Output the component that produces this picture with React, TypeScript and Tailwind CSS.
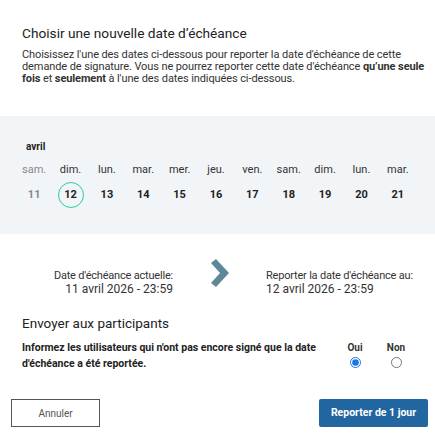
import React, { useState } from 'react';

const days = [
  { wd: 'sam.', d: 11, disabled: true },
  { wd: 'dim.', d: 12 },
  { wd: 'lun.', d: 13 },
  { wd: 'mar.', d: 14 },
  { wd: 'mer.', d: 15 },
  { wd: 'jeu.', d: 16 },
  { wd: 'ven.', d: 17 },
  { wd: 'sam.', d: 18 },
  { wd: 'dim.', d: 19 },
  { wd: 'lun.', d: 20 },
  { wd: 'mar.', d: 21 },
];

export default function App() {
  const [selected, setSelected] = useState(12);
  const [notify, setNotify] = useState(true);

  return (
    <div
      className="w-[435px] h-[440px] bg-white text-[#333] overflow-hidden"
      style={{ fontFamily: 'Roboto, "Liberation Sans", sans-serif' }}
    >
      <div className="px-[22px] pt-[24px]">
        <h2 className="text-[13.7px] leading-[18px] text-[#222]">Choisir une nouvelle date d’échéance</h2>
        <p className="mt-[7px] w-[408px] text-[11px] leading-[12px] tracking-[-0.1px] text-[#333]">
          Choisissez l'une des dates ci-dessous pour reporter la date d'échéance de cette demande de
          signature. Vous ne pourrez reporter cette date d'échéance <b>qu’une seule fois</b> et{' '}
          <b>seulement</b> à l'une des dates indiquées ci-dessous.
        </p>
      </div>

      <div className="mt-[31px] h-[118px] bg-[#f2f5f8] px-[16px] pt-[25px]">
        <div className="pl-[10px] text-[10px] font-bold leading-[12px] text-[#222]">avril</div>
        <div className="mt-[11px] grid w-[400px] grid-cols-11">
          {days.map((x) => (
            <div key={x.d} className="flex flex-col items-center">
              <span
                className={`text-[11px] leading-[12px] ${x.disabled ? 'text-[#888]' : 'text-[#333]'}`}
              >
                {x.wd}
              </span>
              <button
                disabled={x.disabled}
                onClick={() => setSelected(x.d)}
                className={`mt-[6px] flex h-[26px] w-[26px] items-center justify-center rounded-full text-[11px] font-bold ${
                  x.disabled ? 'text-[#888]' : 'text-[#222]'
                } ${selected === x.d ? 'border border-[#25cfa0]' : 'border border-transparent'}`}
              >
                {x.d}
              </button>
            </div>
          ))}
        </div>
      </div>

      <div className="mt-[25px] flex items-start">
        <div className="w-[173px] pt-[11px] text-right">
          <div className="text-[11px] leading-[12px] tracking-[-0.2px]">Date d'échéance actuelle:</div>
          <div className="mt-[1px] text-[12px] leading-[12px]">11 avril 2026 - 23:59</div>
        </div>
        <div className="flex w-[93px] justify-center">
          <svg width="20" height="28" viewBox="0 0 20 28">
            <path d="M1 4 L6 0 L19 14 L6 28 L1 24 L10 14 Z" fill="#5e8797" />
          </svg>
        </div>
        <div className="pt-[11px]">
          <div className="text-[11px] leading-[12px] tracking-[-0.2px]">Reporter la date d'échéance au:</div>
          <div className="mt-[1px] text-[12px] leading-[12px]">12 avril 2026 - 23:59</div>
        </div>
      </div>

      <div className="px-[22px] pt-[20px]">
        <h3 className="text-[13.5px] leading-[16px] text-[#222]">Envoyer aux participants</h3>
        <div className="mt-[9px] flex items-start">
          <p className="w-[300px] text-[10.5px] font-bold leading-[16px] text-[#222]">
            Informez les utilisateurs qui n'ont pas encore signé que la date d'échéance a été reportée.
          </p>
          <div className="ml-[18px] mt-[1px] flex w-[30px] flex-col items-center">
            <span className="text-[10px] font-bold leading-[13px]">Oui</span>
            <input
              type="radio"
              name="notify"
              checked={notify}
              onChange={() => setNotify(true)}
              className="mt-[3px] h-[11px] w-[11px] accent-[#1a73e8]"
            />
          </div>
          <div className="ml-[11px] mt-[1px] flex w-[30px] flex-col items-center">
            <span className="text-[10px] font-bold leading-[13px]">Non</span>
            <input
              type="radio"
              name="notify"
              checked={!notify}
              onChange={() => setNotify(false)}
              className="mt-[3px] h-[11px] w-[11px] accent-[#1a73e8]"
            />
          </div>
        </div>
      </div>

      <div className="mt-[27px] flex justify-between pl-[11px] pr-[7px]">
        <button className="h-[28px] w-[89px] border border-[#555] bg-white text-[10px] text-[#555]">
          Annuler
        </button>
        <button className="h-[28px] w-[109px] rounded-[2px] bg-[#2166a0] text-[10.5px] font-bold text-white">
          Reporter de 1 jour
        </button>
      </div>
    </div>
  );
}
